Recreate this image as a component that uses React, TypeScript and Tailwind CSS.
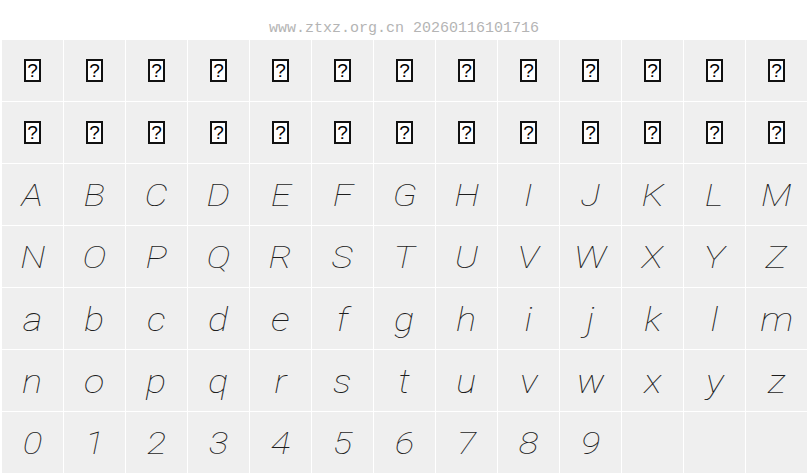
import React from "react";

const rows: string[][] = [
  "ABCDEFGHIJKLM".split(""),
  "NOPQRSTUVWXYZ".split(""),
  "abcdefghijklm".split(""),
  "nopqrstuvwxyz".split(""),
  [..."0123456789".split(""), "", "", ""],
];

function Missing() {
  return (
    <div className="w-[17px] h-[23px] border-2 border-[#111] bg-white flex items-center justify-center">
      <span
        className="text-[19px] leading-none text-black"
        style={{ fontFamily: '"Liberation Sans", Arial, sans-serif' }}
      >
        ?
      </span>
    </div>
  );
}

export default function App() {
  const cells: React.ReactNode[] = [];
  for (let r = 0; r < 2; r++) {
    for (let c = 0; c < 13; c++) {
      cells.push(
        <div key={`m-${r}-${c}`} className="h-[61px] bg-[#efefef] flex items-center justify-center">
          <Missing />
        </div>
      );
    }
  }
  rows.forEach((row, r) =>
    row.forEach((ch, c) => {
      const lower = r === 2 || r === 3;
      cells.push(
        <div key={`g-${r}-${c}`} className="h-[61px] bg-[#efefef] flex items-center justify-center">
          <span
            className={
              lower
                ? "inline-block text-[34px] leading-none italic font-thin text-[#1e1e1e] scale-x-[1.12]"
                : "inline-block text-[32px] leading-none italic font-thin text-[#1e1e1e] scale-x-[1.15]"
            }
            style={{ fontFamily: 'Roboto, Inter, "Noto Sans", sans-serif' }}
          >
            {ch}
          </span>
        </div>
      );
    })
  );

  return (
    <div className="w-[808px] h-[476px] bg-white overflow-hidden">
      <div
        className="h-[40px] pt-[21px] text-center text-[15px] leading-[15px] text-[#b4b4b4]"
        style={{ fontFamily: '"Liberation Mono", "Courier New", monospace' }}
      >
        www.ztxz.org.cn 20260116101716
      </div>
      <div className="grid grid-cols-[repeat(13,61px)] gap-[1px] pl-[2px]">{cells}</div>
    </div>
  );
}
